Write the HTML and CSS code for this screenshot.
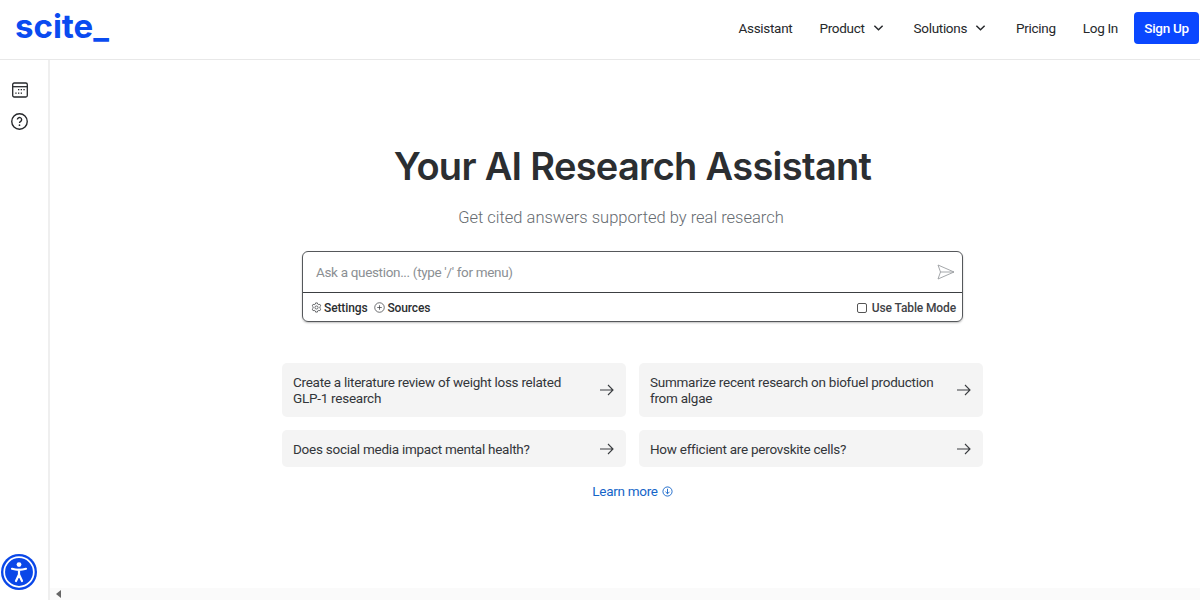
FILE: index.html
```html
<!DOCTYPE html>
<html lang="en">
<head>
<meta charset="utf-8">
<title>scite_ Assistant</title>
<link rel="stylesheet" href="styles.css">
</head>
<body>
<header class="topbar">
  <a class="logo">scite_</a>
  <nav class="nav">
    <a class="nav-link">Assistant</a>
    <a class="nav-link wide">Product <svg class="chev" viewBox="0 0 12 8"><path d="M1.500 1.500 6 6l4.500-4.500"/></svg></a>
    <a class="nav-link wide">Solutions <svg class="chev" viewBox="0 0 12 8"><path d="M1.500 1.500 6 6l4.500-4.500"/></svg></a>
    <a class="nav-link">Pricing</a>
    <a class="nav-link last">Log In</a>
    <a class="signup">Sign Up</a>
  </nav>
</header>
<div class="shell">
  <aside class="side">
    <div class="side-top">
      <svg class="side-icon" viewBox="0 0 16 16"><rect x=".7" y="1" width="14.600" height="14" rx="1.500"/><path d="M.7 4.700h14.600"/><g class="dots"><rect x="6" y="7" width="1.300" height="1.300"/><rect x="8.700" y="7" width="1.300" height="1.300"/><rect x="11.400" y="7" width="1.300" height="1.300"/><rect x="3.300" y="10.500" width="1.300" height="1.300"/><rect x="6" y="10.500" width="1.300" height="1.300"/><rect x="8.700" y="10.500" width="1.300" height="1.300"/></g></svg>
      <svg class="side-icon help" viewBox="0 0 16 16"><circle cx="8" cy="8" r="7.300"/><path d="M6 6.200a2 2 0 1 1 3.100 1.700c-.7.400-1.100.8-1.100 1.500"/><circle class="dot" cx="8" cy="11.500" r=".8"/></svg>
    </div>
    <div class="a11y">
      <svg viewBox="0 0 36 36" class="a11y-icon"><circle class="a-bg" cx="18" cy="18" r="18"/><circle class="a-ring" cx="18" cy="18" r="14.800"/><circle class="a-head" cx="18" cy="10.600" r="2.400"/><path class="a-body" d="M11 14.800q7 2 14 0M18 15.500v6M18 20.500l-3 6.500M18 20.500l3 6.500"/></svg>
    </div>
  </aside>
  <main class="main">
    <div class="content">
      <h1 class="title">Your AI Research Assistant</h1>
      <p class="subtitle">Get cited answers supported by real research</p>
      <div class="ask">
        <div class="ask-input">
          <span class="placeholder">Ask a question... (type '/' for menu)</span>
          <svg class="send" viewBox="0 0 18 16"><path d="M1 1 17 8 1 15l2.500-7zM3.500 8H17"/></svg>
        </div>
        <div class="ask-tools">
          <span class="tool"><svg class="tool-icon" viewBox="0 0 12 12"><circle cx="6" cy="6" r="1.700"/><path d="M5 1h2l.3 1.300 1.200.6 1.200-.4 1 1.700-1 .9v1.800l1 .9-1 1.700-1.200-.4-1.200.6L7 11H5l-.3-1.300-1.200-.6-1.200.4-1-1.700 1-.9V5.100l-1-.9 1-1.700 1.200.4 1.200-.6z"/></svg>Settings</span>
          <span class="tool"><svg class="tool-icon" viewBox="0 0 12 12"><circle cx="6" cy="6" r="5.200"/><path d="M6 3.500v5M3.500 6h5"/></svg>Sources</span>
          <span class="table-mode"><span class="check"></span>Use Table Mode</span>
        </div>
      </div>
      <div class="examples">
        <a class="example tall"><span>Create a literature review of weight loss related <span class="nowrap">GLP-1</span> research</span><svg class="arrow" viewBox="0 0 14 12"><path d="M0 6h13M8 1l5 5-5 5"/></svg></a>
        <a class="example tall"><span>Summarize recent research on biofuel production from algae</span><svg class="arrow" viewBox="0 0 14 12"><path d="M0 6h13M8 1l5 5-5 5"/></svg></a>
        <a class="example"><span>Does social media impact mental health?</span><svg class="arrow" viewBox="0 0 14 12"><path d="M0 6h13M8 1l5 5-5 5"/></svg></a>
        <a class="example"><span>How efficient are perovskite cells?</span><svg class="arrow" viewBox="0 0 14 12"><path d="M0 6h13M8 1l5 5-5 5"/></svg></a>
      </div>
      <a class="learn">Learn more <svg class="learn-icon" viewBox="0 0 12 12"><circle cx="6" cy="6" r="5"/><path d="M6 3v5.500M3.800 6.300 6 8.500l2.200-2.200"/></svg></a>
    </div>
    <div class="hscroll"><span class="hscroll-arrow"></span></div>
  </main>
</div>
</body>
</html>
```
FILE: styles.css
```css
* { box-sizing: border-box; }
html, body { margin: 0; height: 100%; overflow: hidden; }
body {
  width: 1200px;
  height: 600px;
  display: flex;
  flex-direction: column;
  background: #fff;
  color: #2b2e31;
  font-family: Roboto, "Liberation Sans", sans-serif;
}
.topbar {
  height: 60px;
  flex: none;
  display: flex;
  align-items: center;
  justify-content: space-between;
  border-bottom: 1px solid #e8e8e8;
  padding: 0 0 4px 15px;
}
.logo {
  color: #0a4bf0;
  font-family: Inter, sans-serif;
  font-size: 33px;
  font-weight: 700;
  letter-spacing: 0;
  line-height: 1;
  margin-top: -2px;
}
.nav { display: flex; align-items: center; font-size: 13.500px; letter-spacing: -.3px; color: #26282b; }
.nav-link { display: flex; align-items: center; gap: 8px; margin-right: 27px; white-space: nowrap; }
.nav-link.wide { margin-right: 30px; }
.nav-link.last { margin-right: 16px; }
.chev { width: 11px; height: 8px; fill: none; stroke: #26282b; stroke-width: 1.600; }
.signup {
  width: 65px;
  height: 32px;
  margin-right: 1px;
  display: flex;
  align-items: center;
  justify-content: center;
  background: #0a47ff;
  border-radius: 4px;
  color: #fff;
  font-weight: 500;
}
.shell { flex: 1; display: flex; min-height: 0; }
.side {
  width: 50px;
  flex: none;
  border-right: 2px solid #efefef;
  display: flex;
  flex-direction: column;
  justify-content: space-between;
  padding: 22px 0 10px 0;
}
.side-top { display: flex; flex-direction: column; align-items: center; gap: 15px; padding-right: 9px; }
.side-icon { width: 16px; height: 16px; fill: none; stroke: #26282b; stroke-width: 1.300; }
.side-icon .dots { fill: #26282b; stroke: none; }
.help { width: 17px; height: 17px; }
.help .dot { fill: #26282b; stroke: none; }
.a11y { padding-left: 1px; }
.a11y-icon { display: block; width: 36px; height: 36px; }
.a-bg { fill: #0a47e8; }
.a-ring { fill: none; stroke: #fff; stroke-width: 1.700; }
.a-head { fill: #fff; }
.a-body { fill: none; stroke: #fff; stroke-width: 2.200; stroke-linecap: round; stroke-linejoin: round; }
.main { flex: 1; min-width: 0; display: flex; flex-direction: column; }
.content { flex: 1; display: flex; flex-direction: column; align-items: center; padding: 83px 0 0 15px; }
.title { margin: 0; font-family: Inter, sans-serif; font-size: 38px; line-height: 46px; font-weight: 600; letter-spacing: -.7px; color: #2b2e31; }
.subtitle { margin: 17px 23px 0 0; font-size: 16.500px; line-height: 24px; color: #666b70; font-weight: 300; }
.ask {
  margin-top: 21px;
  width: 661px;
  height: 71px;
  border: 1px solid #55585b;
  border-radius: 6px;
  box-shadow: 0 1px 2px rgba(0,0,0,.25);
  display: flex;
  flex-direction: column;
}
.ask-input {
  height: 41px;
  flex: none;
  border-bottom: 1px solid #3c3f42;
  display: flex;
  align-items: center;
  justify-content: space-between;
  padding: 0 7px 0 13px;
}
.placeholder { font-size: 13.500px; letter-spacing: -.33px; color: #8b8f93; }
.send { width: 18px; height: 16px; fill: none; stroke: #9a9da0; stroke-width: .9; }
.ask-tools { flex: 1; display: flex; align-items: center; padding: 1px 6px 0 8px; gap: 7px; font-size: 12px; letter-spacing: -.12px; font-weight: 500; color: #2b2e31; }
.tool { display: flex; align-items: center; gap: 2px; }
.tool-icon { width: 11px; height: 11px; fill: none; stroke: #3a3d40; stroke-width: .8; }
.table-mode { margin-left: auto; display: flex; align-items: center; gap: 5px; color: #3f4347; }
.check { width: 10px; height: 10px; border: 1px solid #555; border-radius: 2px; }
.examples {
  margin-top: 41px;
  width: 701px;
  display: grid;
  grid-template-columns: 1fr 1fr;
  grid-template-rows: 54px 37px;
  gap: 13px;
}
.example {
  display: flex;
  align-items: center;
  justify-content: space-between;
  background: #f4f4f4;
  border-radius: 5px;
  padding: 0 12px 0 11px;
  font-size: 13.500px;
  letter-spacing: -.26px;
  line-height: 16px;
  color: #33363a;
}
.example > span { max-width: 300px; }
.nowrap { white-space: nowrap; }
.arrow { width: 14px; height: 12px; flex: none; fill: none; stroke: #3a3d40; stroke-width: 1.100; }
.learn { margin-top: 15px; display: flex; align-items: center; gap: 4px; color: #1565c8; font-size: 13.500px; letter-spacing: -.3px; line-height: 18px; }
.learn-icon { width: 11px; height: 11px; fill: none; stroke: #1565c8; stroke-width: 1; }
.hscroll { height: 12px; flex: none; background: #fafafa; display: flex; align-items: center; padding-left: 6px; }
.hscroll-arrow { width: 0; height: 0; border-style: solid; border-width: 4px 5px 4px 0; border-color: transparent #666 transparent transparent; }
```
